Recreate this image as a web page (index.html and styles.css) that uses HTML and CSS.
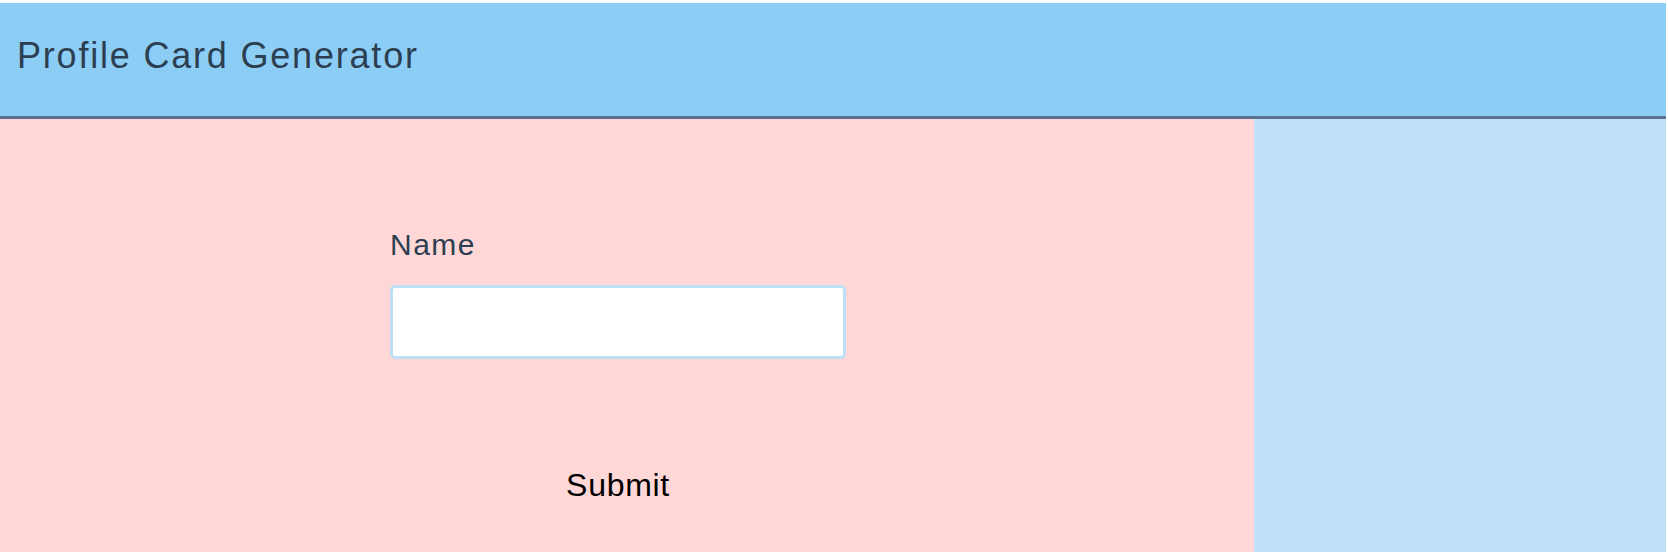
FILE: index.html
```html
<!DOCTYPE html>
<html lang="en">
<head>
<meta charset="utf-8">
<title>Profile Card Generator</title>
<link rel="stylesheet" href="styles.css">
</head>
<body>
  <div class="app">
    <header class="topbar">
      <h1 class="title">Profile Card Generator</h1>
    </header>
    <main class="workspace">
      <section class="editor">
        <form class="profile-form">
          <label class="field-label" for="name">Name</label>
          <input class="field-input" id="name" type="text">
          <button class="submit-btn" type="button">Submit</button>
        </form>
      </section>
      <aside class="preview"></aside>
    </main>
  </div>
</body>
</html>
```

FILE: styles.css
```css
html, body {
  height: 100%;
}

body {
  margin: 3px 2px 0 0;
  background: #ffffff;
  font-family: "Liberation Sans", Arial, sans-serif;
  color: #2c3e50;
  overflow: hidden;
}

.app {
  display: flex;
  flex-direction: column;
  min-height: 100%;
}

.topbar {
  box-sizing: border-box;
  height: 116px;
  flex-shrink: 0;
  background: #8ccdf6;
  border-bottom: 3px solid #5b6f8f;
  padding: 33px 0 0 17px;
}

.title {
  margin: 0;
  font-size: 36px;
  line-height: 40px;
  font-weight: 400;
  letter-spacing: 1.8px;
  color: #2c3e50;
}

.workspace {
  display: flex;
  flex: 1;
  min-height: 440px;
}

.editor {
  width: 1254px;
  background: #fed7d6;
  padding: 109px 0 0 390px;
  box-sizing: border-box;
}

.profile-form {
  display: flex;
  flex-direction: column;
  width: 456px;
}

.field-label {
  font-size: 30px;
  line-height: 34px;
  letter-spacing: 1.5px;
  color: #2c3e50;
  margin-bottom: 23px;
}

.field-input {
  box-sizing: border-box;
  width: 456px;
  height: 74px;
  margin: 0;
  border: 3px solid #bee0f7;
  border-radius: 5px;
  background: #ffffff;
  outline: none;
  font: inherit;
}

.submit-btn {
  margin-top: 108px;
  width: 456px;
  padding: 0;
  border: none;
  background: none;
  font-family: "Liberation Sans", Arial, sans-serif;
  font-size: 32px;
  line-height: 36px;
  letter-spacing: 0.7px;
  color: #000000;
  text-align: center;
}

.preview {
  flex: 1;
  background: #bfe2f8;
}
```
